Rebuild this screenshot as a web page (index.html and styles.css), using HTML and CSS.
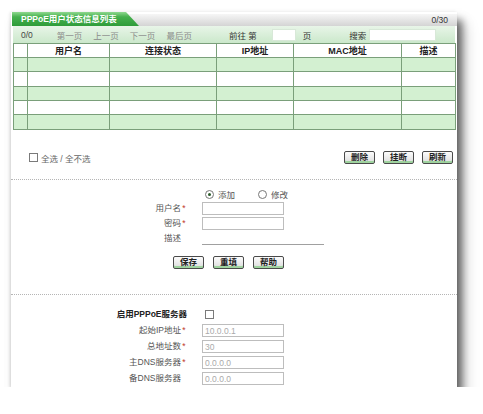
FILE: index.html
```html
<!DOCTYPE html>
<html lang="zh-CN">
<head>
<meta charset="utf-8">
<title>PPPoE用户状态信息列表</title>
<link rel="stylesheet" href="styles.css">
</head>
<body>
<div class="page">
  <div class="panel">
    <div class="head">
      <div class="tab">PPPoE用户状态信息列表</div>
      <div class="headbar">0/30</div>
    </div>
    <div class="nav">
      <span class="n-count">0/0</span>
      <span class="n-link n-first">第一页</span>
      <span class="n-link n-step">上一页</span>
      <span class="n-link n-step">下一页</span>
      <span class="n-link n-step">最后页</span>
      <span class="n-goto">前往 第</span>
      <span class="n-input"></span>
      <span class="n-ye">页</span>
      <span class="n-search">搜索</span>
      <span class="n-sinput"></span>
    </div>
    <table class="grid">
      <colgroup>
        <col class="c0"><col class="c1"><col class="c2"><col class="c3"><col class="c4"><col class="c5">
      </colgroup>
      <tr class="hrow"><th></th><th>用户名</th><th>连接状态</th><th>IP地址</th><th>MAC地址</th><th>描述</th></tr>
      <tr class="g r14"><td></td><td></td><td></td><td></td><td></td><td></td></tr>
      <tr class="w r15"><td></td><td></td><td></td><td></td><td></td><td></td></tr>
      <tr class="g r14"><td></td><td></td><td></td><td></td><td></td><td></td></tr>
      <tr class="w r14"><td></td><td></td><td></td><td></td><td></td><td></td></tr>
      <tr class="g r15"><td></td><td></td><td></td><td></td><td></td><td></td></tr>
    </table>
    <div class="actions">
      <div class="selall"><span class="cbox"></span><span>全选 / 全不选</span></div>
      <div class="btns top-btns">
        <span class="btn">删除</span>
        <span class="btn">挂断</span>
        <span class="btn">刷新</span>
      </div>
    </div>
    <div class="sep sep1"></div>
    <div class="form f1">
      <div class="lbl"></div>
      <div class="field radios">
        <span class="radio on"></span><span class="rtxt">添加</span>
        <span class="radio r2"></span><span class="rtxt">修改</span>
      </div>
      <div class="lbl">用户名<span class="star">*</span></div>
      <div class="field"><span class="inp"></span></div>
      <div class="lbl">密码<span class="star">*</span></div>
      <div class="field"><span class="inp"></span></div>
      <div class="lbl">描述<span class="star blank">*</span></div>
      <div class="field"><span class="line"></span></div>
    </div>
    <div class="btns form-btns">
      <span class="btn">保存</span>
      <span class="btn">重填</span>
      <span class="btn">帮助</span>
    </div>
    <div class="sep sep2"></div>
    <div class="form f2">
      <div class="lbl strong">启用PPPoE服务器</div>
      <div class="field"><span class="cbox cb2"></span></div>
      <div class="lbl">起始IP地址<span class="star">*</span></div>
      <div class="field"><span class="inp dis">10.0.0.1</span></div>
      <div class="lbl">总地址数<span class="star">*</span></div>
      <div class="field"><span class="inp dis">30</span></div>
      <div class="lbl">主DNS服务器<span class="star">*</span></div>
      <div class="field"><span class="inp dis">0.0.0.0</span></div>
      <div class="lbl">备DNS服务器<span class="star blank">*</span></div>
      <div class="field"><span class="inp dis">0.0.0.0</span></div>
    </div>
  </div>
</div>
</body>
</html>
```
FILE: styles.css
```css
* { box-sizing: border-box; }
html, body { margin: 0; padding: 0; background: #fff; }
body {
  font-family: "Liberation Sans", "Noto Sans CJK SC", sans-serif;
  font-size: 8.5px;
  color: #444;
}
.page { padding: 12px 0 0 11px; }
.panel {
  width: 446px;
  background: #fff;
  box-shadow: 5px 8px 8px rgba(0,0,0,0.55), 8px 12px 14px rgba(0,0,0,0.18), -1px 0 3px rgba(0,0,0,0.10);
  padding-bottom: 2px;
}

/* header */
.head { display: flex; height: 14px; }
.tab {
  width: 127px;
  margin-left: 1px;
  height: 14px;
  line-height: 14px;
  padding-left: 9px;
  color: #fff;
  font-weight: bold;
  background: linear-gradient(#8fd88f 0%, #46b04e 35%, #2f9c3a 100%);
  clip-path: polygon(0 0, 114px 0, 100% 100%, 0 100%);
  white-space: nowrap;
}
.headbar {
  flex: 1;
  margin-left: -12px;
  margin-top: 2px;
  height: 12px;
  line-height: 12px;
  text-align: right;
  padding-right: 9px;
  color: #333;
  background: linear-gradient(#f6f6f6, #d4d4d4);
}

/* nav bar */
.nav {
  margin: 0 2px;
  height: 17px;
  display: flex;
  align-items: center;
  padding-left: 8px;
  background: linear-gradient(#e8f5e8, #cbe8cb);
  color: #333;
  white-space: nowrap;
}
.n-count { color: #444; }
.n-link { color: #8a8a8a; }
.n-first { margin-left: 24px; }
.n-step { margin-left: 11px; }
.n-goto { margin-left: 37px; }
.n-input { margin-left: 15px; width: 24px; height: 12px; background: #fff; border: 1px solid #d8e8d8; }
.n-ye { margin-left: 7px; }
.n-search { margin-left: 38px; }
.n-sinput { margin-left: 3px; width: 67px; height: 12px; background: #fff; border: 1px solid #d8e8d8; }

/* table */
.grid {
  margin: 0 2px;
  width: 442px;
  border-collapse: collapse;
  table-layout: fixed;
  border: 1px solid #7d9d7d;
}
.c0 { width: 14px; }
.c1 { width: 82px; }
.c2 { width: 107px; }
.c3 { width: 77px; }
.c4 { width: 108px; }
.c5 { width: 54px; }
.grid th, .grid td {
  border: 1px solid #7a9f7a;
  padding: 0;
}
.grid th {
  height: 14px;
  font-size: 9px;
  font-weight: bold;
  color: #222;
  background: #fff;
  line-height: 12px;
}
.r14 td { height: 14px; }
.r15 td { height: 15px; }
.g td { background: #d3f0d1; }
.w td { background: #fff; }

/* actions row */
.actions {
  margin-top: 21px;
  height: 13px;
  display: flex;
  align-items: center;
  justify-content: space-between;
  padding: 0 4px 0 18px;
}
.selall { display: flex; align-items: center; color: #666; }
.cbox {
  display: inline-block;
  width: 9px;
  height: 9px;
  border: 1px solid #7a7a7a;
  background: #fff;
  margin-right: 3px;
}
.btns { display: flex; }
.top-btns { gap: 8px; }
.btn {
  display: inline-flex;
  align-items: center;
  justify-content: center;
  width: 31px;
  height: 13px;
  border: 1px solid #4a4a4a;
  border-radius: 2px;
  background: linear-gradient(#fcfcfc, #dcdcdc);
  box-shadow: inset 0 -2px 0 #9fd39f;
  color: #222;
  font-weight: bold;
  line-height: 1;
}

.sep { border-top: 1px dotted #b5b5b5; }
.sep1 { margin-top: 15px; }
.sep2 { margin-top: 25px; }

/* forms */
.form {
  display: grid;
  grid-template-columns: 176px 1fr;
  column-gap: 15px;
  align-items: center;
}
.f1 { padding-top: 8px; grid-template-rows: 12px 13px 13px 13px; row-gap: 2px; }
.f2 { padding-top: 13px; grid-template-rows: repeat(5, 13px); row-gap: 3px; }
.lbl { text-align: right; color: #555; white-space: nowrap; line-height: 13px; }
.lbl.strong { font-weight: bold; color: #222; }
.star { display: inline-block; width: 6px; text-align: center; color: #c0392b; }
.star.blank { visibility: hidden; }
.field { display: flex; align-items: center; height: 13px; }
.radios { color: #555; }
.radio {
  display: inline-block;
  width: 9px;
  height: 9px;
  border: 1px solid #777;
  border-radius: 50%;
  background: #fff;
  margin-left: 3px;
  position: relative;
}
.radio.on::after {
  content: "";
  position: absolute;
  left: 2px; top: 2px;
  width: 3px; height: 3px;
  border-radius: 50%;
  background: #2a5a2a;
}
.radio.r2 { margin-left: 23px; }
.rtxt { margin-left: 4px; }
.inp {
  display: inline-flex;
  align-items: center;
  width: 82px;
  height: 13px;
  border: 1px solid #bdbdbd;
  background: #fff;
  padding-left: 2px;
}
.inp.dis { color: #aaa; }
.line { display: block; width: 122px; height: 13px; border-bottom: 1px solid #a0a0a0; }
.cb2 { margin-left: 3px; }

.form-btns { margin-top: 11px; padding-left: 162px; gap: 9px; }
```
